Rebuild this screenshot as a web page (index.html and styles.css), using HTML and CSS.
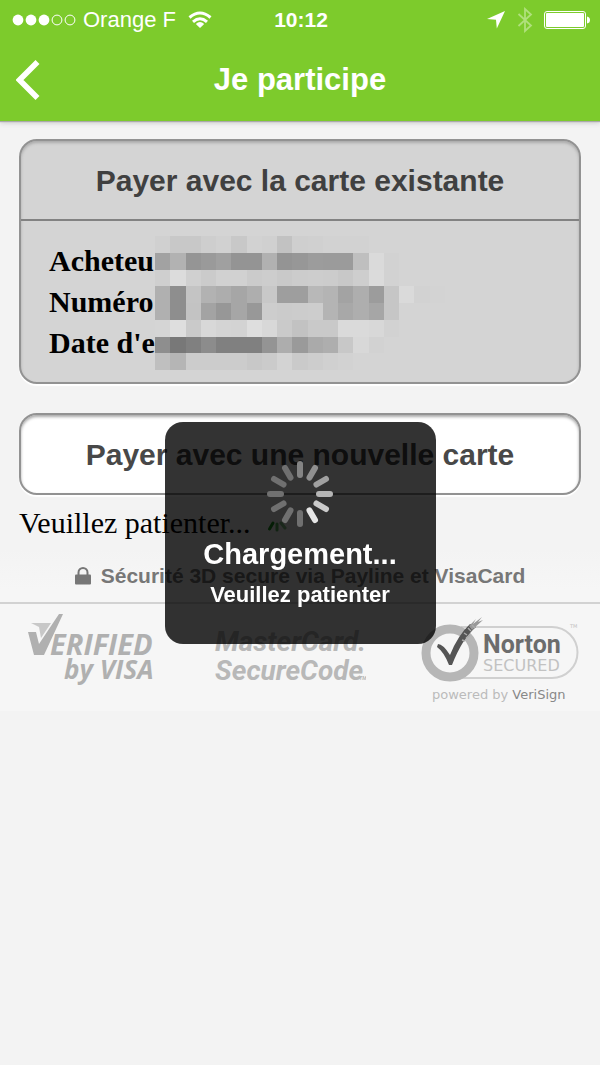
FILE: index.html
```html
<!DOCTYPE html>
<html lang="fr">
<head>
<meta charset="utf-8">
<meta name="viewport" content="width=device-width, initial-scale=1">
<title>Je participe</title>
<link rel="stylesheet" href="styles.css">
</head>
<body>
<header class="header">
  <div class="status">
    <div class="status-left">
      <svg class="signal" width="64" height="12" viewBox="0 0 64 12" aria-hidden="true">
        <g fill="#fff"><circle cx="6" cy="6" r="5.4"/><circle cx="19" cy="6" r="5.4"/><circle cx="32" cy="6" r="5.4"/></g>
        <g fill="none" stroke="#fff"><circle cx="45" cy="6" r="4.9"/><circle cx="58" cy="6" r="4.9"/></g>
      </svg>
      <span>Orange F</span>
      <svg width="24" height="18" viewBox="0 0 24 18" aria-hidden="true">
        <g fill="none" stroke="#fff" stroke-width="3"><path d="M1.5 6.5Q12-2.5 22.500 6.500"/><path d="M5 10.800Q12 4.700 19 10.800"/></g>
        <path d="M7.800 13Q12 9.200 16.200 13L12 17Z" fill="#fff"/>
      </svg>
    </div>
    <span class="time">10:12</span>
    <div class="status-right">
      <svg width="18" height="18" viewBox="0 0 18 18" aria-hidden="true"><path d="M18 0L9.800 17.500L9 8.800L0 8Z" fill="#fff"/></svg>
      <svg class="bluetooth" width="16" height="26" viewBox="0 0 16 26" aria-hidden="true"><path d="M1.500 7L14 18.500L8 24V2L14 7.500L1.500 19" fill="none" stroke="#b0e07c" stroke-width="1.800"/></svg>
      <svg width="46" height="18" viewBox="0 0 46 18" aria-hidden="true"><rect x=".5" y=".5" width="41" height="17" rx="2.500" fill="none" stroke="#fff"/><rect x="2" y="2" width="38" height="14" rx="1" fill="#fff"/><path d="M43 5.500Q46 6 46 9T43 12.500Z" fill="#fff"/></svg>
    </div>
  </div>
  <nav class="nav">
    <button class="back" type="button" aria-label="Retour">
      <svg width="24" height="40" viewBox="0 0 24 40" aria-hidden="true"><path d="M21.500 2L3.500 20L21.500 38" fill="none" stroke="#fff" stroke-width="5.600"/></svg>
    </button>
    <h1 class="title">Je participe</h1>
  </nav>
</header>

<main class="content">
  <section class="card">
    <button class="card-button" type="button">Payer avec la carte existante</button>
    <div class="card-details">
      <div class="labels"><div>Acheteu</div><div>Numéro</div><div>Date d'e</div></div>
      <svg class="mosaic" width="290" height="134" viewBox="0 0 19 8" preserveAspectRatio="none" shape-rendering="crispEdges" aria-hidden="true"></svg>
    </div>
  </section>
  <button class="new-card" type="button">Payer avec une nouvelle carte</button>
  <p class="wait">Veuillez patienter...
    <svg width="24" height="24" viewBox="0 0 24 24" aria-hidden="true"><g stroke="#17931b" stroke-width="3" stroke-linecap="round"><path d="M8 12L4.500 18"/><path d="M12 13V19" opacity=".7"/><path d="M16 12L20 17" opacity=".5"/></g></svg>
  </p>
</main>

<footer class="footer">
  <div class="security">
    <svg width="16" height="18" viewBox="0 0 16 18" aria-hidden="true"><path d="M3.500 9V5.500a4.500 4.500 0 0 1 9 0V9" fill="none" stroke="#777" stroke-width="2"/><rect y="7.500" width="16" height="10" rx="1" fill="#777"/></svg>
    <span>Sécurité 3D secure via Payline et VisaCard</span>
  </div>
  <div class="logos">
    <svg width="130" height="74" viewBox="0 0 130 74" role="img" aria-label="Verified by Visa">
      <path d="M0 18H8L11 30L31 0H35L16 41H6Z" fill="#b0b0b0"/><path d="M3 9H23L13 24L11 13Z" fill="#c8c8c8"/>
      <g class="logo-italic" fill="#b0b0b0"><text x="22" y="41" font-size="29">ERIFIED</text><text x="36" y="65" font-size="26">by VISA</text></g>
    </svg>
    <svg width="154" height="76" viewBox="0 0 154 76" role="img" aria-label="MasterCard SecureCode">
      <g class="logo-master" fill="#b8b8b8"><text x="3" y="37" font-size="28">MasterCard.</text><text x="3" y="66" font-size="28">SecureCode</text><text x="151" y="66" text-anchor="middle" font-size="5">TM</text></g>
    </svg>
    <svg width="160" height="90" viewBox="-1 -2 160 90" role="img" aria-label="Norton Secured powered by VeriSign">
      <path d="M40 11H131A25.500 25.500 0 0 1 131 62H40" fill="none" stroke="#d0d0d0" stroke-width="2"/>
      <circle cx="29" cy="37" r="24" fill="#f6f6f6" stroke="#b6b6b6" stroke-width="9"/>
      <path d="M17 28Q22 28 29 39Q37 19 49 8L55 11Q41 23 31 49H28Q23 36 16 31Z" fill="#555"/>
      <path d="M48 10L55 3L52 8L61 1L57 6L62 4L51 14Z" fill="#999"/>
      <path d="M43 17l3 2M47 12l3 3M45 22l4-3M41 24l3 1M51 9l3 3" stroke="#aaa" stroke-width="1.500"/>
      <text class="norton" x="62" y="37" font-size="25">Norton</text>
      <text class="secured" x="62" y="55" font-size="16">SECURED</text>
      <text class="powered" x="11" y="83" font-size="13">powered by <tspan>VeriSign</tspan></text>
      <text class="secured" x="149" y="12" font-size="5">TM</text>
    </svg>
  </div>
</footer>

<div class="overlay">
  <div class="loader" role="status">
    <svg width="66" height="66" viewBox="-33 -33 66 66" aria-hidden="true">
      <g stroke-width="6" stroke-linecap="round">
        <path d="M0-19V-30" stroke="#848484"/><path d="M0-19V-30" stroke="#909090" transform="rotate(30)"/><path d="M0-19V-30" stroke="#a0a0a0" transform="rotate(60)"/><path d="M0-19V-30" stroke="#b5b5b5" transform="rotate(90)"/><path d="M0-19V-30" stroke="#cacaca" transform="rotate(120)"/><path d="M0-19V-30" stroke="#e6e6e6" transform="rotate(150)"/>
        <g stroke="#707070"><path d="M0-19V-30" transform="rotate(180)"/><path d="M0-19V-30" transform="rotate(210)"/><path d="M0-19V-30" transform="rotate(240)"/><path d="M0-19V-30" transform="rotate(270)"/><path d="M0-19V-30" transform="rotate(300)"/><path d="M0-19V-30" transform="rotate(330)"/></g>
      </g>
    </svg>
    <strong class="loader-title">Chargement...</strong>
    <span class="loader-text">Veuillez patienter</span>
  </div>
</div>
<script src="mosaic.js"></script>
</body>
</html>
```
FILE: styles.css
```css
* { box-sizing: border-box; }
body { margin: 0; min-height: 100vh; background: #f3f3f3; font-family: "Liberation Sans", Arial, sans-serif; }
svg { display: block; flex: none; }
button { font: inherit; border: 0; padding: 0; cursor: pointer; }
.header { background: #7dcb2c; color: #fff; box-shadow: 0 1px 1px #aaa, 0 2px 5px #ccc; }
.status { display: grid; grid-template-columns: 1fr auto 1fr; align-items: center; height: 40px; padding: 0 10px 0 12px; font-size: 22px; }
.status-left, .status-right { display: flex; align-items: center; gap: 12px; }
.status-left .signal { margin-right: -5px; }
.status-right { justify-content: flex-end; }
.status-right .bluetooth { margin-right: -1px; }
.time { font-size: 21px; font-weight: bold; }
.nav { display: grid; grid-template-columns: 40px 1fr 40px; align-items: center; height: 81px; padding: 0 16px 2px; }
.back { background: none; justify-self: start; }
.title { margin: 0; text-align: center; font-size: 31px; line-height: 40px; }
.content { padding: 18px 19px 0; }
.card, .new-card { border: 2px solid #929292; border-radius: 18px; box-shadow: 0 2px 1px #fff, inset 0 2px 3px #aaa; }
.card { background: #d4d4d4; overflow: hidden; }
.card-button { display: block; width: 100%; height: 80px; padding-top: 2px; background: none; border-bottom: 2px solid #828282; color: #404040; font-size: 30px; font-weight: bold; }
.card-details { display: flex; align-items: center; height: 161px; padding: 2px 28px 0; }
.labels { padding-bottom: 2px; font: bold 30px/41px "Liberation Serif", "Times New Roman", serif; }
.new-card { display: block; width: 100%; height: 82px; margin-top: 29px; padding-top: 2px; background: #fff; color: #484848; font-size: 30px; font-weight: bold; }
.wait { display: flex; align-items: center; gap: 14px; margin: 10px 0 0; font: 30px/36px "Liberation Serif", "Times New Roman", serif; }
.footer { margin-top: 8px; background: linear-gradient(#f3f3f3, #f6f6f6 40px); }
.security { display: flex; align-items: center; justify-content: center; gap: 10px; height: 55px; border-bottom: 2px solid #d2d2d2; color: #777; font-size: 21px; font-weight: bold; white-space: nowrap; }
.logos { display: flex; justify-content: space-between; align-items: flex-start; height: 107px; padding: 10px 20px 0 28px; }
.logo-italic { font-family: "Open Sans", "Noto Sans", sans-serif; font-weight: bold; font-style: italic; }
.logo-master { font-family: Roboto, "Liberation Sans", sans-serif; font-weight: bold; font-style: italic; }
.norton { font-family: Roboto, sans-serif; font-weight: bold; fill: #6c6c6c; }
.secured { font-family: "DejaVu Sans", sans-serif; fill: #c2c2c2; }
.powered { font-family: "DejaVu Sans", sans-serif; fill: #bbb; }
.powered tspan { fill: #888; }
.overlay { position: fixed; inset: 0; display: flex; align-items: center; justify-content: center; }
.loader { display: flex; flex-direction: column; align-items: center; width: 271px; padding: 39px 20px 33px; border-radius: 18px; background: rgba(0, 0, 0, .8); color: #fff; }
.loader-title { margin-top: 7px; font-size: 29px; line-height: 40px; }
.loader-text { margin-top: 5px; font-size: 22px; line-height: 32px; font-weight: bold; }
```
FILE: mosaic.js
```js
// Grey level of every tile that masks the card holder's details, row by row.
const rows = [
  "d0 c8 c8 ce d1 c8 d2 d0 c2 cf d0 d2 d2 d2",
  "a2 b2 95 9a a0 94 94 b1 94 97 9c 9b 9b bf da d2",
  "cf dc d0 cb d1 d1 cb cd c9 cc cd cc c8 ce db d2",
  "b0 8e c4 b2 ad a6 ae c8 9e 9e b8 b4 a3 ae 9c c6 da d2 d3",
  "b0 8e c3 a3 97 a6 98 cd cb cc cd b4 a8 ae a6 c6 d4",
  "d5 de ca d8 d4 d3 de d8 ca c2 c9 c9 da da d8 d2",
  "8e 78 80 8c 80 80 80 94 ad 9a aa ae c8 d8 d2",
  "bf b5 cc cc cc cc c8 cb d3 ca cd d0 d2"
];
const mosaic = document.querySelector(".mosaic");
rows.forEach((row, y) => row.split(" ").forEach((level, x) => {
  const tile = document.createElementNS("http://www.w3.org/2000/svg", "rect");
  tile.setAttribute("x", x);
  tile.setAttribute("y", y);
  tile.setAttribute("width", 1);
  tile.setAttribute("height", 1);
  tile.setAttribute("fill", "#" + level + level + level);
  mosaic.append(tile);
}));
```
